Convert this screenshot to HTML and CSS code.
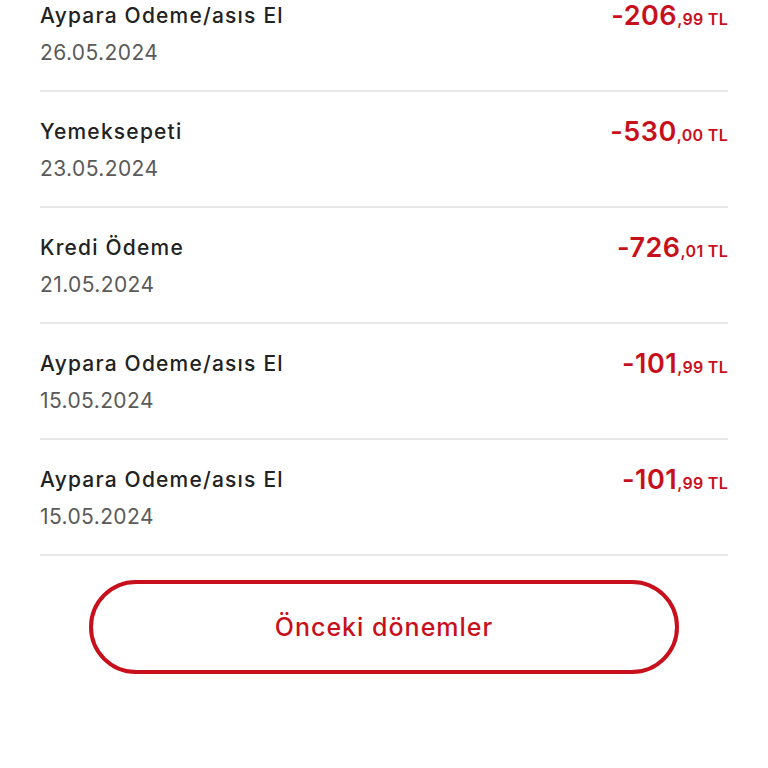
FILE: index.html
```html
<!DOCTYPE html>
<html>
<head>
    <title>Hesap Hareketleri</title>
    <link rel="stylesheet" href="styles.css">
</head>
<body>
    <div class="transactions">
        <div class="tx-row">
            <div class="tx-info">
                <p class="tx-title">Aypara Odeme/asıs El</p>
                <p class="tx-date">26.05.2024</p>
            </div>
            <p class="tx-amount">-206<span class="tx-cents">,99 TL</span></p>
        </div>
        <div class="tx-row">
            <div class="tx-info">
                <p class="tx-title">Yemeksepeti</p>
                <p class="tx-date">23.05.2024</p>
            </div>
            <p class="tx-amount">-530<span class="tx-cents">,00 TL</span></p>
        </div>
        <div class="tx-row">
            <div class="tx-info">
                <p class="tx-title">Kredi Ödeme</p>
                <p class="tx-date">21.05.2024</p>
            </div>
            <p class="tx-amount">-726<span class="tx-cents">,01 TL</span></p>
        </div>
        <div class="tx-row">
            <div class="tx-info">
                <p class="tx-title">Aypara Odeme/asıs El</p>
                <p class="tx-date">15.05.2024</p>
            </div>
            <p class="tx-amount">-101<span class="tx-cents">,99 TL</span></p>
        </div>
        <div class="tx-row">
            <div class="tx-info">
                <p class="tx-title">Aypara Odeme/asıs El</p>
                <p class="tx-date">15.05.2024</p>
            </div>
            <p class="tx-amount">-101<span class="tx-cents">,99 TL</span></p>
        </div>
    </div>

    <div class="actions">
        <button class="prev-btn">Önceki dönemler</button>
    </div>
</body>
</html>
```

FILE: styles.css
```css
body {
    font-family: Inter, "Noto Sans", Arial, sans-serif;
    background-color: #fff;
    margin: 0;
    padding: 0;
}

.transactions {
    margin: -24px 40px 0 40px;
}

.tx-row {
    display: flex;
    justify-content: space-between;
    align-items: flex-start;
    padding: 27px 0 24px 0;
    border-bottom: 2px solid #e8e8e8;
}

.tx-row p {
    margin: 0;
}

.tx-title {
    font-size: 21px;
    line-height: 26px;
    font-weight: 500;
    color: #222;
    letter-spacing: 1.2px;
}

.tx-date {
    margin-top: 11px !important;
    font-size: 21px;
    line-height: 26px;
    color: #5a5a5a;
    letter-spacing: 0.4px;
}

.tx-amount {
    font-size: 27px;
    line-height: 26px;
    font-weight: 600;
    color: #c8101c;
    letter-spacing: 0.5px;
}

.tx-cents {
    font-size: 16px;
    font-weight: 600;
    letter-spacing: 0.3px;
}

.actions {
    display: flex;
    justify-content: center;
    margin-top: 24px;
}

.prev-btn {
    width: 590px;
    height: 94px;
    border: 4px solid #c8101c;
    border-radius: 47px;
    background-color: #fff;
    color: #c8101c;
    font-family: Inter, "Noto Sans", Arial, sans-serif;
    font-size: 25px;
    font-weight: 500;
    letter-spacing: 1px;
}
```
